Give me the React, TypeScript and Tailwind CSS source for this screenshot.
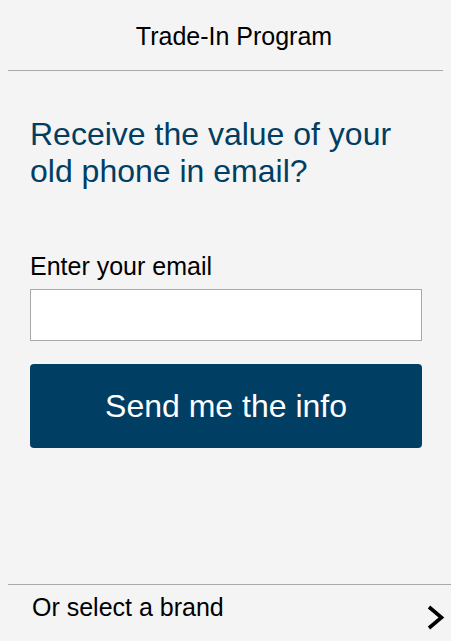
export default function App() {
  return (
    <div className="flex h-screen flex-col overflow-hidden bg-[#f4f4f4] font-['Liberation_Sans',Arial,sans-serif] text-black">
      <header className="mx-[8px] flex h-[71px] items-center justify-center border-b border-[#a9a9a9] pl-[17px] pt-[2px]">
        <h1 className="text-[25px] leading-[29px]">Trade-In Program</h1>
      </header>

      <main className="ml-[30px] mr-[29px] flex flex-col">
        <h2 className="mt-[45px] text-[32px] leading-[37px] text-[#003e63]">
          Receive the value of your old phone in email?
        </h2>

        <label htmlFor="email" className="mt-[62px] text-[25px] leading-[29px]">
          Enter your email
        </label>
        <input
          id="email"
          type="email"
          className="mt-[8px] h-[52px] w-full border border-[#a9a9a9] bg-white px-3 text-[20px] outline-none"
        />

        <button className="mt-[23px] flex h-[84px] w-full items-center justify-center rounded-[4px] bg-[#003e63] text-[32px] text-white">
          Send me the info
        </button>
      </main>

      <footer className="ml-[8px] mt-auto flex h-[57px] shrink-0 justify-between border-t border-[#a9a9a9]">
        <span className="pl-[24px] pt-[8px] text-[25px] leading-[29px]">Or select a brand</span>
        <svg className="mr-[6px] mt-[19px]" width="19" height="27" viewBox="0 0 19 27" fill="none">
          <polyline points="3,3 15.5,13.5 3,24" stroke="#000" strokeWidth="3.6" strokeLinejoin="miter" />
        </svg>
      </footer>
    </div>
  );
}
